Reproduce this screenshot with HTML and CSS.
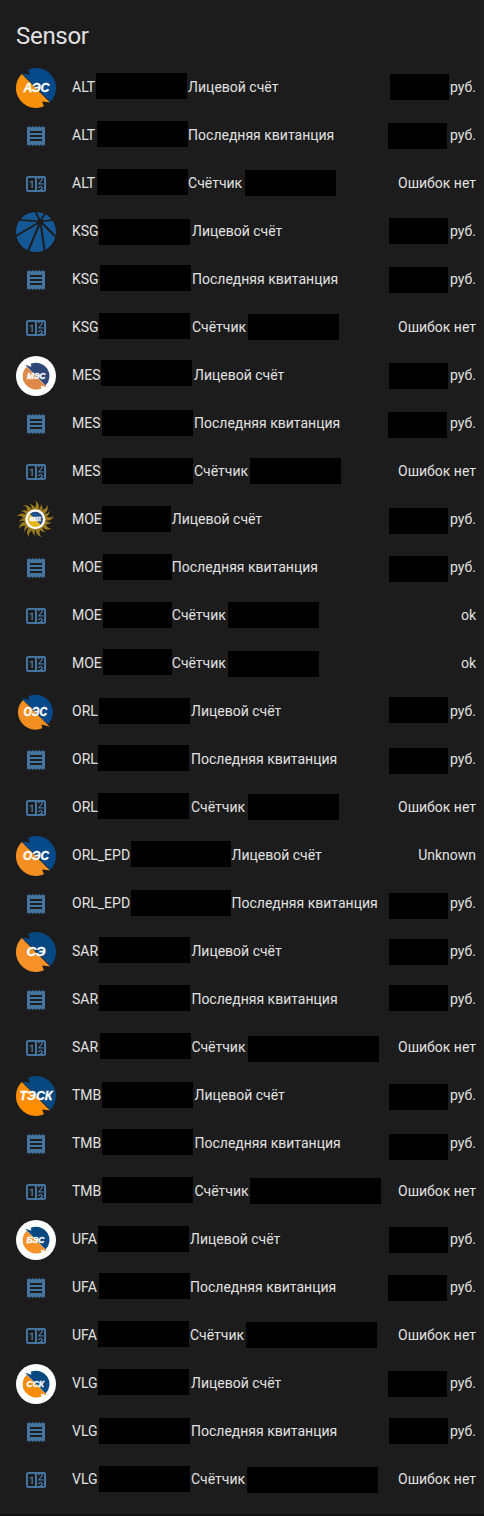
FILE: index.html
```html
<!DOCTYPE html>
<html lang="ru">
<head>
<meta charset="utf-8">
<title>Sensor</title>
<link rel="stylesheet" href="styles.css">
</head>
<body>
<svg class="sprite" aria-hidden="true">
  <symbol id="receipt" viewBox="0 0 24 24"><path d="M3,22L4.5,20.5L6,22L7.5,20.5L9,22L10.5,20.5L12,22L13.5,20.5L15,22L16.5,20.5L18,22L19.5,20.5L21,22V2L19.5,3.5L18,2L16.5,3.5L15,2L13.5,3.5L12,2L10.5,3.5L9,2L7.5,3.5L6,2L4.5,3.5L3,2M18,9H6V7H18M18,13H6V11H18M18,17H6V15H18V17Z"/></symbol>
  <symbol id="counter" viewBox="0 0 24 24"><path d="M4,4H20A2,2 0 0,1 22,6V18A2,2 0 0,1 20,20H4A2,2 0 0,1 2,18V6A2,2 0 0,1 4,4M4,6V18H11V6H4M20,18V6H18.76C19,6.54 18.95,7.07 18.95,7.13C18.88,7.8 18.41,8.5 18.24,8.75L15.91,11.3L19.23,11.28L19.24,12.5L14.04,12.47L14,11.47C14,11.47 17.05,8.24 17.2,7.95C17.34,7.67 17.91,6 16.5,6C15.27,6.05 15.41,7.3 15.41,7.3L13.87,7.31C13.87,7.31 13.88,6.65 14.25,6H13V18H15.58L15.57,17.14L16.54,17.13C16.54,17.13 17.45,16.97 17.46,16.08C17.5,15.08 16.65,15.08 16.5,15.08C16.37,15.08 15.43,15.13 15.43,15.95H13.91C13.91,15.95 13.95,13.89 16.5,13.89C19.1,13.89 18.96,15.91 18.96,15.91C18.96,15.91 19,17.16 17.85,17.63L18.37,18H20M8.92,16H7.42V10.2L5.62,10.76V9.53L8.76,8.41H8.92V16Z"/></symbol>
</svg>
<main class="card">
  <h1 class="card-title">Sensor</h1>
  <div class="entities" id="entities"></div>
</main>
<script src="app.js"></script>
</body>
</html>
```

FILE: styles.css
```css
body {
  margin: 0;
  background: #151015;
  color: #e1e1e1;
  font-family: Roboto, "Noto Sans", sans-serif;
  font-size: 14px;
}

.sprite {
  display: none;
}

.card {
  box-sizing: border-box;
  height: 1514px;
  background: #1c1c1c;
}

.card-title {
  margin: 0;
  padding: 12px 16px 8px;
  font-size: 24px;
  font-weight: 400;
  line-height: 48px;
  letter-spacing: -0.288px;
}

.entities {
  display: flex;
  flex-direction: column;
  gap: 8px;
}

.row {
  display: flex;
  height: 40px;
  padding: 0 8px 0 16px;
  white-space: nowrap;
}

.badge {
  display: flex;
  flex: none;
  align-items: center;
  justify-content: center;
  width: 40px;
  margin-right: 16px;
}

.logo {
  width: 40px;
  height: 40px;
  overflow: visible;
}

.logo-text {
  fill: #fff;
  stroke: #fff;
  stroke-width: 0.35px;
  font-family: "Liberation Sans", sans-serif;
  font-style: italic;
  font-weight: 700;
}

.icon {
  width: 24px;
  height: 24px;
  fill: #44739e;
}

.name {
  display: grid;
}

.state {
  display: flex;
  margin-left: auto;
}

.text {
  line-height: 38px;
}

.mask {
  height: 26px;
  background: #000;
}

.state .mask {
  width: 59px;
}
```

FILE: app.js
```js
const NAME_LEFT = 72;
const RIGHT_EDGE = 476;
const UNIT_WIDTH = 26;

const KINDS = { a: 'Лицевой счёт', r: 'Последняя квитанция', c: 'Счётчик' };

// Each row: [kind, account mask x, top], then a state: [mask x, top] or text,
// and for meters the serial mask [x, top, width].
const GROUPS = [
  { code: 'ALT', logo: ['full', 'АЭС', '#f7900a', '#04498a', 26, 7.4], w: 91, label: 188.1, rows: [
    ['a', 96, 5, [390, 6]], ['r', 97, 5, [388, 7]], ['c', 97, 5, 'Ошибок нет', [245, 6, 91]]] },
  { code: 'KSG', logo: ['rays'], w: 91, label: 192, rows: [
    ['a', 99, 7, [389, 6]], ['r', 100, 5, [389, 7]], ['c', 99, 5, 'Ошибок нет', [248, 6, 91]]] },
  { code: 'MES', logo: ['ring', 'МЭС', '#df8948', '#304878', 18.5, 11], w: 91, label: 194, rows: [
    ['a', 101, 4, [389, 7]], ['r', 102, 6, [388, 8]], ['c', 102, 6, 'Ошибок нет', [250, 6, 91]]] },
  { code: 'MOE', logo: ['sun'], w: 69, label: 171.8, rows: [
    ['a', 102, 6, [389, 8]], ['r', 103, 6, [389, 8]],
    ['c', 103, 6, 'ok', [228, 6, 91]], ['c', 103, 5, 'ok', [228, 7, 91]]] },
  { code: 'ORL', logo: ['small', 'ОЭС', '#f28f20', '#04498a', 23.5, 7.6], w: 91, label: 191, rows: [
    ['a', 99, 6, [389, 5]], ['r', 98, 5, [389, 8]], ['c', 98, 5, 'Ошибок нет', [248, 6, 91]]] },
  { code: 'ORL_EPD', logo: ['full', 'ОЭС', '#f28f20', '#04498a', 26, 7], w: 100, label: 231.5, rows: [
    ['a', 131, 5, 'Unknown'], ['r', 131, 6, [389, 9]]] },
  { code: 'SAR', logo: ['full', 'СЭ', '#f59127', '#054882', 19, 10.5], w: 91, label: 191.4, rows: [
    ['a', 99, 5, [389, 7]], ['r', 99, 5, [389, 5]], ['c', 100, 5, 'Ошибок нет', [248, 8, 131]]] },
  { code: 'TMB', logo: ['full', 'ТЭСК', '#ff8d02', '#054980', 33, 3.4], w: 91, label: 194.5, rows: [
    ['a', 102, 6, [389, 8]], ['r', 102, 5, [389, 10]], ['c', 102, 5, 'Ошибок нет', [250, 6, 131]]] },
  { code: 'UFA', logo: ['ring', 'БЭС', '#f59127', '#054882', 18, 10.5], w: 91, label: 190, rows: [
    ['a', 98, 6, [389, 7]], ['r', 99, 5, [388, 7]], ['c', 98, 5, 'Ошибок нет', [246, 6, 131]]] },
  { code: 'VLG', logo: ['ring', 'ССК', '#f68d06', '#054882', 17.5, 10.5], w: 91, label: 191, rows: [
    ['a', 98, 5, [388, 7]], ['r', 99, 6, [389, 6]], ['c', 99, 6, 'Ошибок нет', [247, 7, 131]]] },
];

function halves(orange, blue) {
  return `<path fill="${orange}" d="M28,38.33A20,20 0 0 1 5.8,5.9L34,34.6L26,33.5Z"/>
    <path fill="${blue}" d="M12,1.67A20,20 0 0 1 34.2,34.1L6,5.4L14,6.5Z"/>`;
}

function spikedHalves(orange, blue) {
  return `<path fill="${orange}" d="M28,38.33A20,20 0 0 1 5.8,5.9L36.5,36.8L27,34Z"/>
    <path fill="${blue}" d="M12,1.67A20,20 0 0 1 34.2,34.1L3.5,3.2L13,6Z"/>`;
}

function sunLogo() {
  let flames = '';
  for (let i = 0; i < 18; i++) {
    const size = i % 2 ? 0.88 : 1;
    flames += `<path d="M-3.4,-8C-1,-12 3,-14.5 -0.5,-19C4.5,-16 4.6,-11.5 2,-8Z" transform="rotate(${i * 20}) scale(${size})"/>`;
  }
  return `<g transform="translate(19.3 19.3)"><g fill="#9b7b20">${flames}</g>
    <circle r="10" fill="#fff"/><circle r="7.6" fill="#e5b51c"/>
    <path fill="#23508c" d="M-5.4,-5.4A7.6,7.6 0 0 1 5.4,5.4Z"/>
    <text class="logo-text" x="-5.5" y="1.8" font-size="4.6" textLength="11" lengthAdjust="spacingAndGlyphs">МЖКХ</text></g>`;
}

function raysLogo() {
  return `<circle cx="20" cy="20" r="20" fill="#155896"/>
    <g stroke="#1c1c1c" stroke-width="1.7"><path d="M24.4,9.5L19,-1M24.4,9.5L29.5,0M24.4,9.5L3,7.9M24.4,9.5L37,7.8"/>
    <path stroke-width="2" d="M24.4,9.5L0,24M24.4,9.5L11.8,40M24.4,9.5L28.8,40M24.4,9.5L40,25"/></g>
    <circle cx="24.4" cy="9.5" r="2.8" fill="#1c1c1c"/>`;
}

function logoSvg([shape, text, orange, blue, width, x]) {
  let body;
  if (shape === 'rays') body = raysLogo();
  else if (shape === 'sun') body = sunLogo();
  else {
    const small = shape === 'ring';
    const art = {
      full: () => halves(orange, blue),
      small: () => `<g transform="translate(2 2.8) scale(.87)">${spikedHalves(orange, blue)}</g>`,
      ring: () => `<circle cx="20" cy="20" r="20" fill="#fff"/><g transform="translate(6.7 6.7) scale(.67)">${spikedHalves(orange, blue)}</g>`,
    }[shape]();
    body = `${art}<text class="logo-text" x="${x}" y="${small ? 22.8 : 24.2}" font-size="${small ? 8.4 : 12}" textLength="${width}" lengthAdjust="spacingAndGlyphs">${text}</text>`;
  }
  return `<svg class="logo" viewBox="0 0 40 40">${body}</svg>`;
}

function mask(top, extra = '') {
  return `<span class="mask" style="margin-top:${top}px;${extra}"></span>`;
}

function rowHtml(group, [kind, x, top, state, serial]) {
  const badge = kind === 'a'
    ? logoSvg(group.logo)
    : `<svg class="icon"><use href="#${kind === 'r' ? 'receipt' : 'counter'}"/></svg>`;

  const gap = group.label - x - group.w;
  const columns = [x - NAME_LEFT, group.w + gap];
  if (serial) columns.push(serial[0] - group.label, serial[2]);
  const template = columns.map(c => `${c}px`).join(' ') + (serial ? '' : ' auto');

  const name = `<span class="text">${group.code}</span>${mask(top, `width:${group.w}px`)}
    <span class="text">${KINDS[kind]}</span>${serial ? mask(serial[1]) : ''}`;

  const value = typeof state === 'string'
    ? `<span class="text">${state}</span>`
    : `${mask(state[1], `margin-right:${RIGHT_EDGE - UNIT_WIDTH - state[0] - 59}px`)}<span class="text" style="width:${UNIT_WIDTH}px">руб.</span>`;

  return `<div class="row"><div class="badge">${badge}</div>
    <div class="name" style="grid-template-columns:${template}">${name}</div>
    <div class="state">${value}</div></div>`;
}

document.getElementById('entities').innerHTML =
  GROUPS.map(g => g.rows.map(r => rowHtml(g, r)).join('')).join('');
```
